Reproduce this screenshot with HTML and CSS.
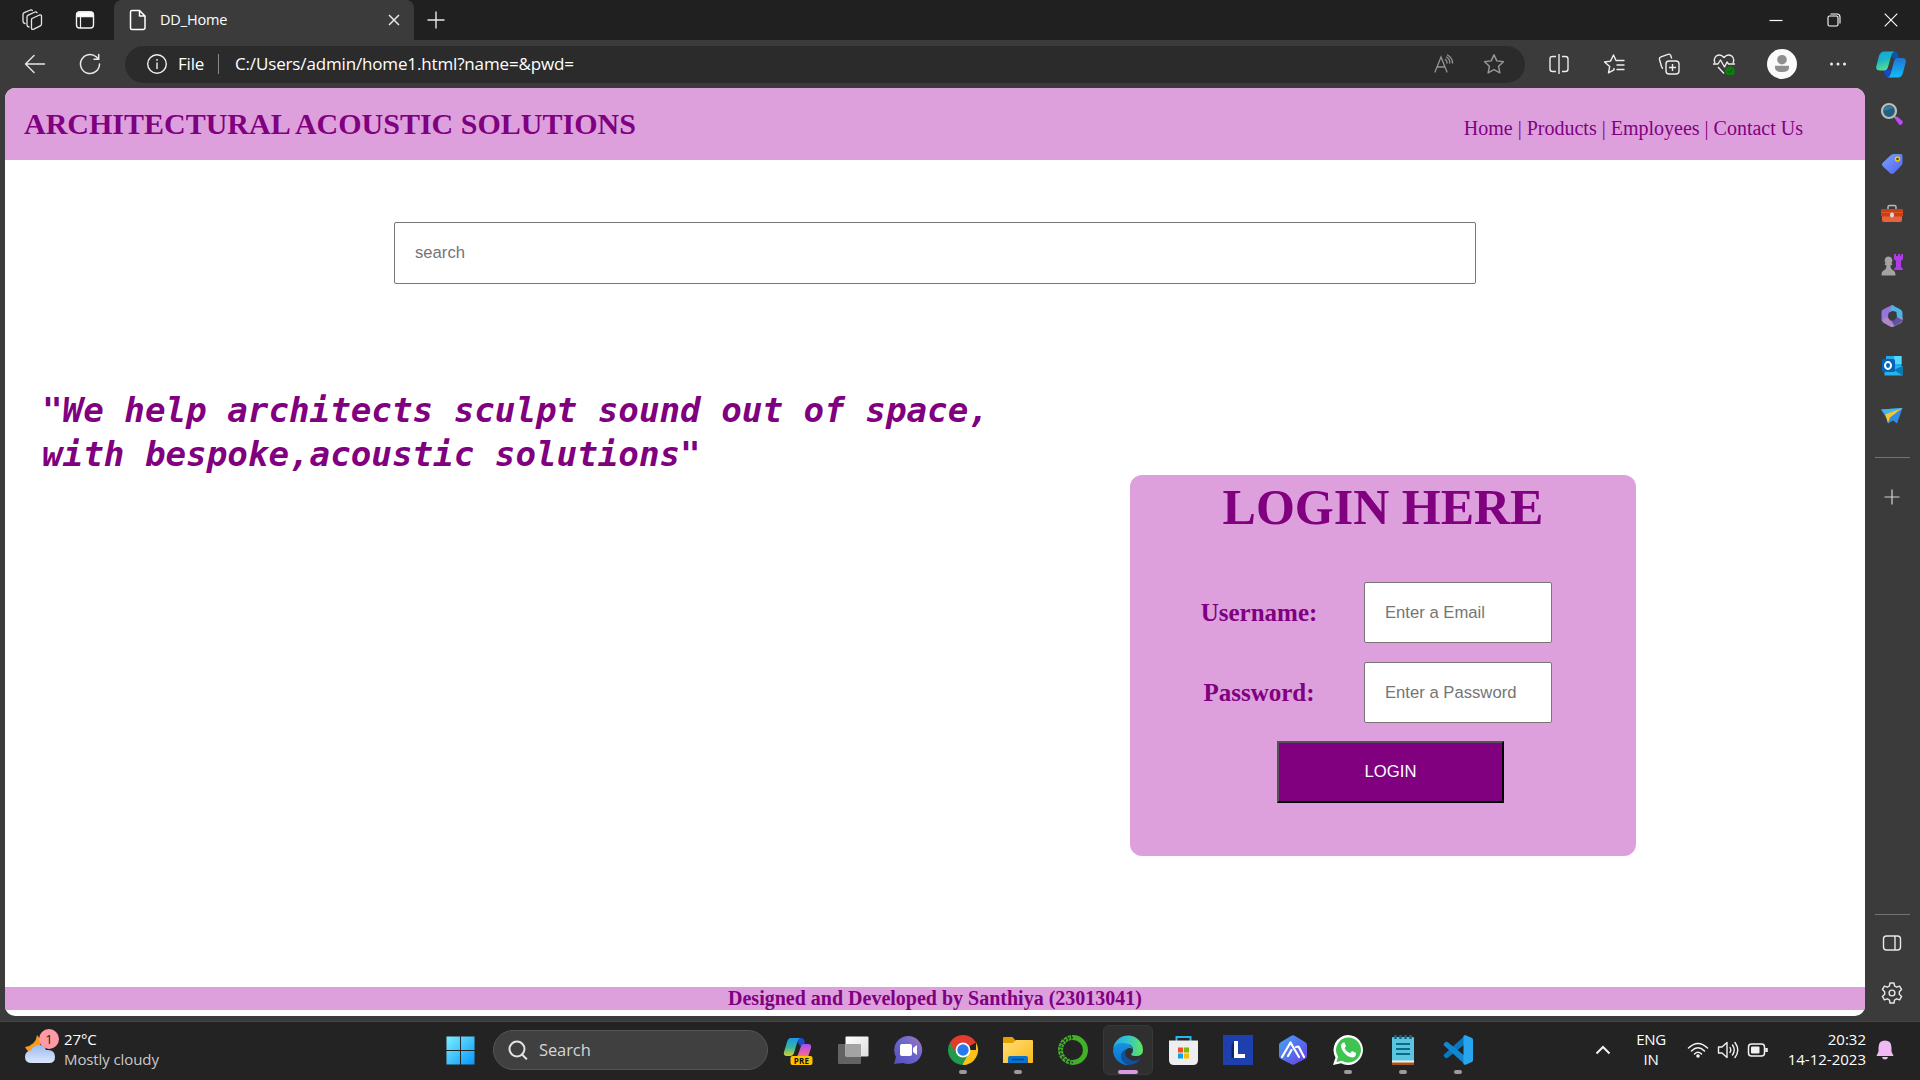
FILE: index.html
```html
<!DOCTYPE html>
<html lang="en">
<head>
<meta charset="utf-8">
<title>DD_Home</title>
<link rel="stylesheet" href="styles.css">
</head>
<body>
<div class="screen">
  <div class="tabbar">
    <svg class="tb-workspaces" width="22" height="22" viewBox="0 0 22 22" fill="none" stroke="#e4e4e4" stroke-width="1.3" stroke-linejoin="round" stroke-linecap="round"><path d="M11 9.500 18.500 6q2-.5 2 1v8q0 1.200-1.200 1.800l-6.500 3.400q-2.300.8-2.300-1.200v-8q0-1 .5-1.500zM8 18Q6 17.500 6 16V8q0-1.200 1.200-1.800L14 3q1.500-.5 2 .8M4 14.500Q2 14 2 12.500V5.500q0-1.200 1.200-1.800L9.500 1q1.300-.3 1.800.5"/></svg>
    <svg class="tb-actions" width="20" height="20" viewBox="0 0 20 20" fill="none" stroke="#f2f2f2" stroke-width="1.400"><rect x="1.500" y="2" width="17" height="16" rx="3"/><path d="M2 4.500Q2 2 5 2h10q3 0 3 2.500V6.500H2z" fill="#fff"/><path d="M5.500 6v12" stroke-width="1.200"/></svg>
    <div class="tab">
      <svg width="18" height="22" viewBox="0 0 18 22" fill="none" stroke="#fff" stroke-width="1.500" stroke-linejoin="round"><path d="M3 1.500h7.500L16 7v11.500q0 2-2 2H3q-1.500 0-1.500-1.500V3Q1.500 1.500 3 1.500zM10.500 1.500V7H16"/></svg>
      <span class="tab-title">DD_Home</span>
      <svg class="tab-close" width="12" height="14" viewBox="0 0 12 14" stroke="#e8e8e8" stroke-width="1.500"><path d="M1 2l10 10M11 2 1 12"/></svg>
    </div>
    <svg class="new-tab" width="18" height="18" viewBox="0 0 18 18" stroke="#e8e8e8" stroke-width="1.400"><path d="M9 .5v17M.5 9h17"/></svg>
    <div class="window-buttons">
      <svg width="14" height="14" viewBox="0 0 14 14" stroke="#fff" stroke-width="1.200"><path d="M.5 7.500h13"/></svg>
      <svg width="14" height="14" viewBox="0 0 14 14" fill="none" stroke="#fff" stroke-width="1.100"><rect x="1" y="3" width="10" height="10" rx="1.500"/><path d="M3.500 1h6.500q3 0 3 3v6.500"/></svg>
      <svg width="14" height="14" viewBox="0 0 14 14" stroke="#fff" stroke-width="1.100"><path d="M.7.700l12.600 12.600M13.300.700.7 13.300"/></svg>
    </div>
  </div>

  <div class="toolbar">
    <svg class="nav-back" width="22" height="20" viewBox="0 0 22 20" fill="none" stroke="#e8e8e8" stroke-width="1.400" stroke-linecap="round" stroke-linejoin="round"><path d="M20.500 10H1.500M10 1.500 1.500 10l8.500 8.500"/></svg>
    <svg class="nav-reload" width="22" height="22" viewBox="0 0 22 22" fill="none" stroke="#e8e8e8" stroke-width="1.500" stroke-linecap="round"><path d="M20.500 11a9.500 9.500 0 1 1-3.300-7.200L19.500 6M19.700 1.500V6.200H15"/></svg>
    <div class="address">
      <svg width="22" height="22" viewBox="0 0 22 22" fill="none" stroke="#f0f0f0" stroke-width="1.400"><circle cx="11" cy="11" r="9.300"/><path d="M11 9.500V16M11 6v1.700"/></svg>
      <span class="scheme">File</span>
      <span class="divider"></span>
      <span class="url">C:/Users/admin/home1.html?name=&amp;pwd=</span>
      <svg class="addr-read" width="22" height="20" viewBox="0 0 22 20" fill="none" stroke="#969696" stroke-width="1.300" stroke-linecap="round"><path d="M2 18 8 3l6 15M4 13h8M12.500 5.500q1.800 1.500 1.500 3.500M13.500 3q3.500 2 3.200 6M14.500 1q5 3 5 8"/></svg>
      <svg class="addr-star" width="22" height="22" viewBox="0 0 24 24" fill="none" stroke="#969696" stroke-width="1.600" stroke-linejoin="round"><path d="M12 2l3.100 6.600 7.200.9-5.300 5 1.400 7.200L12 18.200l-6.400 3.500L7 14.500l-5.300-5 7.200-.9z"/></svg>
    </div>
    <div class="tools">
      <svg width="22" height="22" viewBox="0 0 22 22" fill="none" stroke="#ededed" stroke-width="1.400"><path d="M8 3.500H4.500Q2 3.500 2 6v10Q2 18.500 4.500 18.500H8M14 3.500h3.500Q20 3.500 20 6v10q0 2.500-2.500 2.500H14M11 1v20"/></svg>
      <svg width="22" height="22" viewBox="0 0 22 22" fill="none" stroke="#ededed" stroke-width="1.400" stroke-linejoin="round" stroke-linecap="round"><path d="M11 15.500v1.300l-5.500 3 1.200-6.300L1.500 9l6-.9L10.500 2 13 7.500h8M14 12h7M14 16.500h7"/></svg>
      <svg width="22" height="22" viewBox="0 0 22 22" fill="none" stroke="#ededed" stroke-width="1.400" stroke-linejoin="round"><rect x="8" y="8" width="13" height="13" rx="3"/><path d="M14.500 11v7M11 14.500h7M5 15.500Q4 15 3.500 13.500L1.500 6.500Q1 4.500 3 3.800l7-2.500q2-.6 2.700 1.200l1 3"/></svg>
      <svg width="22" height="22" viewBox="0 0 22 22" fill="none" stroke="#ededed" stroke-width="1.400" stroke-linejoin="round"><path d="M2 10Q0 5.500 3.500 2.800 7.500.5 11 4.500 14.500.5 18.500 2.800 22 5.500 20 10M0 11h5l2.500-4 4 7 2.500-5 1.500 2H22M5 14l6 6.500"/><circle cx="17" cy="18" r="4.800" fill="#107c10" stroke="none"/><path d="M14.800 18l1.600 1.600 3-3.200" stroke="#064d0a" stroke-width="1"/></svg>
      <svg class="avatar" width="30" height="30" viewBox="0 0 30 30"><circle cx="15" cy="15" r="15" fill="#fafafa"/><circle cx="15" cy="10.700" r="4.800" fill="#8f8f8f"/><path d="M8 16.800h14v1.700q0 4.500-7 4.500t-7-4.500z" fill="#8f8f8f"/></svg>
      <svg width="18" height="6" viewBox="0 0 18 6" fill="#ededed"><circle cx="2.500" cy="3" r="1.500"/><circle cx="9" cy="3" r="1.500"/><circle cx="15.500" cy="3" r="1.500"/></svg>
    </div>
    <svg class="copilot" width="30" height="27" viewBox="0 0 30 27"><defs><linearGradient id="cpA" x1="0" y1="0" x2=".3" y2="1"><stop offset="0" stop-color="#1aa0e8"/><stop offset=".5" stop-color="#18b6c4"/><stop offset="1" stop-color="#55dd93"/></linearGradient><linearGradient id="cpB" x1="0" y1="0" x2="0" y2="1"><stop offset="0" stop-color="#2173d8"/><stop offset="1" stop-color="#12bdfa"/></linearGradient></defs><path d="M14 .5h5q2.500 0 3 3l1 4h-6z" fill="#0b57a5"/><path d="M7 19h8l-2 7.500q-3 0-4-3z" fill="#1748ce"/><path d="M8 .5h10q-2 1-3 5l-3 10.500q-1 3.500-4 3.500H4q-5 0-3.500-5L3 5Q4.500.5 8 .500z" fill="url(#cpA)"/><path d="M21 7h5q5 0 3.500 5L27 21.500q-1.200 5-5 5H12q2-1 3-5l3-11q1-3.500 3-3.500z" fill="url(#cpB)"/></svg>
  </div>

  <div class="middle">
    <div class="page">
      <header class="site-header">
        <h1>ARCHITECTURAL ACOUSTIC SOLUTIONS</h1>
        <nav>Home | Products | Employees | Contact Us</nav>
      </header>
      <input class="search" type="text" placeholder="search">
      <p class="quote">"We help architects sculpt sound out of space,<br>with bespoke,acoustic solutions"</p>
      <form class="login">
        <h2>LOGIN HERE</h2>
        <div class="fields">
          <label>Username:</label><input type="text" placeholder="Enter a Email">
          <label>Password:</label><input type="text" placeholder="Enter a Password">
        </div>
        <button type="button">LOGIN</button>
      </form>
      <footer>Designed and Developed by Santhiya (23013041)</footer>
    </div>

    <aside class="sidebar">
      <svg width="24" height="24" viewBox="0 0 24 24"><path d="M14.500 16l2.500-1.500 5.500 4.500q1 1.500-.5 3t-3 .5z" fill="#c04af2"/><path d="M13.500 13.500l2.500 2.500" stroke="#888" stroke-width="2"/><circle cx="9" cy="9" r="7" fill="#235f80" stroke="#bdbdb8" stroke-width="2.200"/><path d="M4 9a5 5 0 0 1 9-3" fill="#347d9f"/></svg>
      <svg width="24" height="24" viewBox="0 0 24 24"><defs><linearGradient id="tag" x1="0" x2="1" y2="1"><stop offset="0" stop-color="#77a5ff"/><stop offset="1" stop-color="#5560ee"/></linearGradient></defs><path d="M14 2h6.500q2 0 2 2v7q0 1.500-1.500 3l-7 7q-2 2-4 0l-7-6.500q-2-2 0-4L11 3q1.500-1 3-1z" fill="url(#tag)"/><circle cx="17.500" cy="7" r="2" fill="#4d3c22" stroke="#f3d000" stroke-width="1.500"/></svg>
      <svg width="24" height="24" viewBox="0 0 24 24"><path d="M8 7V4q0-1.500 1.500-1.500h5Q16 2.500 16 4v3" fill="none" stroke="#b6bbb9" stroke-width="1.500"/><rect x="2" y="11" width="20" height="8" rx="2" fill="#e8633b"/><rect x="1" y="6" width="22" height="7.500" rx="1.200" fill="#c94018"/><path d="M1 9.500h22" stroke="#e25328"/><rect x="10" y="9.500" width="4" height="5" rx="2" fill="#d5d8d8"/></svg>
      <svg width="24" height="24" viewBox="0 0 24 24"><path d="M14 1h2v2h2V1h2v2h1V1h2v5l-2 2v6q2 1 2 3h-9q0-2 2-3V8l-2-2z" fill="#b03be8"/><path d="M8.500 3.500a4 4 0 0 1 3 6.500l1 1.500-2 1q0 4 3 5 2 1 2 5h-14q0-4 2-5 3-1 3-5l-2-1 1-1.500a4 4 0 0 1 3-6.500z" fill="#a3a3a3"/></svg>
      <svg width="24" height="24" viewBox="0 0 24 24"><path d="M12 1 3 5.500Q1.500 6.500 1.500 8v8l7-2.500V9l5-2.500V1.500z" fill="#9278dd"/><path d="M12 1l8.500 4.500Q22.500 6.500 22.500 9v7l-6-3V8L10 6z" fill="#4cb5e8"/><path d="M1.500 16l5-3 6 4 10-4v3q0 2-1.500 3L14 22.500q-2 1-4 0L3 18.500z" fill="#af88ca"/><path d="M16 13l6.500 3-1 2-7 4-3-5z" fill="#5f53a2"/><path d="M10 8h5l2 4-2.500 4.500H10L8 12z" fill="#3b3b3b"/></svg>
      <svg width="24" height="24" viewBox="0 0 24 24"><path d="M6 2h15.500v18H6z" fill="#28a8ea"/><path d="M14 2h7.500v8H14z" fill="#50d9ff"/><path d="M4.500 12l18 0v9.500h-18z" fill="#25b3ed"/><path d="M22.500 12v9.500L14 16z" fill="#0878b8"/><rect x="2" y="5" width="13" height="13" rx="1.500" fill="#0364b8"/><ellipse cx="8" cy="11.500" rx="3" ry="3.400" fill="none" stroke="#fff" stroke-width="2"/></svg>
      <svg width="24" height="24" viewBox="0 0 24 24"><path d="M1 5.500 22.500 4 17 19.500l-4-3-5 3-2-6z" fill="#318ee5"/><path d="M1 5.500 22.500 4 7 12z" fill="#41b4ef"/><path d="M5 10.500 22.500 4 10 13.500l-2 5.500-1.500-5z" fill="#f7c52b"/></svg>
      <span class="rule"></span>
      <svg class="side-plus" width="16" height="16" viewBox="0 0 16 16" stroke="#d4d4d4" stroke-width="1.200"><path d="M8 .5v15M.5 8h15"/></svg>
      <div class="side-bottom">
        <span class="rule"></span>
        <svg width="22" height="22" viewBox="0 0 22 22" fill="none" stroke="#e8e8e8" stroke-width="1.400"><rect x="2.500" y="4" width="17" height="14" rx="3"/><path d="M14 4v14"/></svg>
        <svg width="24" height="24" viewBox="0 0 24 24" fill="none" stroke="#e8e8e8" stroke-width="1.400" stroke-linejoin="round"><circle cx="12" cy="12" r="2.900"/><path d="M10 2h4l.6 3 2 1.200 3-1.100 2 3.500-2.300 2.100v2.600l2.300 2.100-2 3.500-3-1.100-2 1.200-.6 3h-4l-.6-3-2-1.200-3 1.100-2-3.500 2.300-2.100v-2.600L2.400 8.600l2-3.500 3 1.100 2-1.200z"/></svg>
      </div>
    </aside>
  </div>

  <div class="taskbar">
    <div class="weather">
      <div class="weather-icon">
        <svg width="34" height="30" viewBox="0 0 34 30"><defs><linearGradient id="cl" x1="0" y1="0" x2="0" y2="1"><stop offset="0" stop-color="#9bb9ef"/><stop offset="1" stop-color="#dbe8fb"/></linearGradient></defs><path d="M13 0q-1 10-12 12 3 6 9 6 8-2 6-14z" fill="#f59b1e"/><path d="M8 28q-7 0-7-6 0-6 6-6.500Q9 10 15 10q5 0 7 5 9-1 9 7 0 6-6 6z" fill="url(#cl)"/></svg>
        <span class="badge">1</span>
      </div>
      <div class="weather-text"><span class="temp">27°C</span><span class="sky">Mostly cloudy</span></div>
    </div>

    <div class="app start"><svg width="29" height="29" viewBox="0 0 30 30"><defs><linearGradient id="wn" gradientUnits="userSpaceOnUse" x1="0" y1="0" x2="30" y2="30"><stop offset="0" stop-color="#7cf1ff"/><stop offset="1" stop-color="#0594fb"/></linearGradient></defs><path d="M.5.500h14v14H.500zM15.500.500h14v14h-14zM.5 15.500h14v14H.500zM15.500 15.500h14v14h-14z" fill="url(#wn)"/></svg></div>
    <div class="task-search">
      <svg width="20" height="20" viewBox="0 0 20 20" fill="none" stroke="#e3e3e3" stroke-width="2" stroke-linecap="round"><circle cx="9" cy="9" r="7.500"/><path d="M14 14.500l4.300 4.300"/></svg>
      <span>Search</span>
    </div>
    <div class="app">
      <svg width="32" height="32" viewBox="0 0 32 32"><defs><linearGradient id="pA" x1="0" y1="0" x2="0" y2="1"><stop offset="0" stop-color="#1f97ed"/><stop offset=".5" stop-color="#31b6a3"/><stop offset="1" stop-color="#d8cf32"/></linearGradient><linearGradient id="pB" x1="0" y1="0" x2="0" y2="1"><stop offset="0" stop-color="#a64df2"/><stop offset="1" stop-color="#ff6f86"/></linearGradient></defs><path d="M14 4h5q3 0 4 5l-5 3z" fill="#1950c7"/><path d="M9 4h9q-2 1-3 5l-3 10q-1 3-4 3H5q-4 0-3-4L5 8q1-4 4-4z" fill="url(#pA)"/><path d="M21 10h5q4 0 3 4l-3 9H14q2-1 3-5l2-6q.5-2 2-2z" fill="url(#pB)"/><rect x="8.500" y="22" width="22" height="9" rx="2" fill="#ffc400"/><text x="19.500" y="29.500" text-anchor="middle" class="pre">PRE</text></svg>
    </div>
    <div class="app"><svg width="32" height="32" viewBox="0 0 32 32"><defs><linearGradient id="tvw" x2="1" y2="1"><stop offset="0" stop-color="#fff"/><stop offset="1" stop-color="#ddd"/></linearGradient></defs><rect x="1" y="10" width="23" height="20" rx="1" fill="#636363"/><rect x="8.500" y="2.500" width="23" height="20" rx="1" fill="url(#tvw)"/><rect x="8.500" y="10" width="15.500" height="12.500" fill="#a3a3a3"/></svg></div>
    <div class="app"><svg width="32" height="32" viewBox="0 0 32 32"><defs><linearGradient id="ct" x1="1" x2="0" y2="1"><stop offset="0" stop-color="#ad71b8"/><stop offset=".4" stop-color="#6e69cf"/><stop offset="1" stop-color="#5550b8"/></linearGradient></defs><path d="M16 2a14 14 0 1 1-5 27L2 30l2-7A14 14 0 0 1 16 2z" fill="url(#ct)"/><rect x="8" y="10" width="12" height="12" rx="2" fill="#fff"/><path d="M21 14l4-3v10l-4-3z" fill="#fff"/></svg></div>
    <div class="app run"><svg width="32" height="32" viewBox="0 0 32 32"><path d="M16 16 3 8.500A15 15 0 0 1 29 8.500z" fill="#e33b2e"/><path d="M16 16H29l0-7.500A15 15 0 0 1 16 31z" fill="#fbc116"/><path d="M3 8.500 16 16l5 5-5.500 10A15 15 0 0 1 3 8.500z" fill="#229a4c"/><path d="M16 9h13.300v-.5H3L9 19z" fill="#e33b2e"/><path d="M22.500 18 15.500 31l4-.5z" fill="#fbc116"/><circle cx="16" cy="16" r="7.400" fill="#fff"/><circle cx="16" cy="16" r="5.700" fill="#2878ee"/></svg></div>
    <div class="app run"><svg width="32" height="32" viewBox="0 0 32 32"><defs><linearGradient id="fe" x2="1" y2="1"><stop offset="0" stop-color="#ffdf78"/><stop offset="1" stop-color="#fcb817"/></linearGradient></defs><path d="M1 4q0-1 1-1h8.500l3.500 4-3 4H1z" fill="#e5a000"/><path d="M1 9h10l3-3h16q1 0 1 1v21q0 1-1 1H1z" fill="url(#fe)"/><path d="M6 29v-5q0-2 2-2h16q2 0 2 2v5z" fill="#0873cb"/><path d="M10 25.500h12" stroke="#02448c" stroke-width="1.500"/></svg></div>
    <div class="app"><svg width="32" height="32" viewBox="0 0 32 32" fill="none" stroke="#43b02a"><path d="M16 3.500a12.500 12.500 0 0 1 0 25" stroke-width="5"/><path d="M16 28.500a12.500 12.500 0 0 1 0-25" stroke-width="5" stroke-dasharray="3 .8"/><path d="M16 28.500a12.500 12.500 0 0 1 0-25" stroke-width="1.300" stroke="#242424" stroke-dasharray="1.500 2.300"/></svg></div>
    <div class="app run active"><svg width="32" height="32" viewBox="0 0 32 32"><defs><linearGradient id="e1" x2="1"><stop offset="0" stop-color="#23a9e8"/><stop offset=".5" stop-color="#35c5cb"/><stop offset="1" stop-color="#63e45a"/></linearGradient><linearGradient id="e2" y2="1" x2="0"><stop offset="0" stop-color="#1691de"/><stop offset="1" stop-color="#0873d2"/></linearGradient></defs><path d="M1.200 14A15 15 0 0 1 31 16q0 6-7 6-5 0-5-2 2-1 2-4 0-6-7-6-8 0-12.800 4z" fill="url(#e1)"/><path d="M1 16q1-7 10-7 8 0 10 6-6-3-8 3-1 7 4 13A15 15 0 0 1 1 16z" fill="url(#e2)"/><path d="M14 15q-3 8 5 11 5 2 10-2-5 8-14 6.500Q8 27 9 21q1-4 5-6z" fill="#10509f"/></svg></div>
    <div class="app"><svg width="32" height="32" viewBox="0 0 32 32"><path d="M9.500 8V3h14v5" fill="none" stroke="#27b7e9" stroke-width="2"/><path d="M2 6.500h29V26q0 5-5 5H7q-5 0-5-5z" fill="#eeeeef"/><path d="M11 13.500h5v5h-5z" fill="#f25022"/><path d="M17 13.500h5v5h-5z" fill="#7fba00"/><path d="M11 19.500h5v5h-5z" fill="#00a4ef"/><path d="M17 19.500h5v5h-5z" fill="#ffb900"/></svg></div>
    <div class="app"><svg width="32" height="32" viewBox="0 0 32 32"><path d="M1 1h30v30H1z" fill="#1e3fae"/><path d="M12 7 9.500 12v12h2.500z" fill="#10265f"/><path d="M12 7h4v13h7v4H12z" fill="#fff"/></svg></div>
    <div class="app"><svg width="32" height="32" viewBox="0 0 32 32"><defs><linearGradient id="hx" x2="1" y2="1"><stop offset="0" stop-color="#48a4f1"/><stop offset=".5" stop-color="#5372ee"/><stop offset="1" stop-color="#7237dd"/></linearGradient></defs><path d="M14 2q2-1.500 4 0l10 6q2 1 2 3v11q0 2-2 3l-10 5q-2 1.500-4 0L4 25q-2-1-2-3V11q0-2 2-3z" fill="url(#hx)"/><path d="M5 23 13.500 8.500 22 23M11 22l3.500-6M19 13l2.500-.5L27 23" fill="none" stroke="#fff" stroke-width="2.200" stroke-linecap="round" stroke-linejoin="round"/></svg></div>
    <div class="app run"><svg width="32" height="32" viewBox="0 0 32 32"><path d="M16 1a15 15 0 1 1-7 28.300L1 31l2.500-7.500A15 15 0 0 1 16 1z" fill="#fff"/><path d="M16.200 3.500a12.500 12.500 0 1 1-6.200 23.200L4.500 28 6 22.700A12.500 12.500 0 0 1 16.200 3.500z" fill="#3fc351"/><path d="M11 8.500q-3 2-1.500 6 3.500 7.500 10.500 9 4 0 4-4.500l-4-2-2 2.200q-4-1.500-5.500-5l1.500-2-1.500-3.700z" fill="#fff"/></svg></div>
    <div class="app run"><svg width="32" height="32" viewBox="0 0 32 32"><path d="M5 28h22v3H5z" fill="#a6541c"/><path d="M5 26h22v2.500H5z" fill="#f1eee8"/><path d="M5 4q0-1 1-1h20q1 0 1 1v22.500H5z" fill="#5bc5df"/><path d="M9 10h14M9 15h14M9 20h14" stroke="#0b6989" stroke-width="2"/><path d="M8.500 1v4M13.500 1v4M18.500 1v4M23.500 1v4" stroke="#13678b" stroke-width="2.600"/></svg></div>
    <div class="app run"><svg width="32" height="32" viewBox="0 0 32 32"><path d="M23 1.500 2 20.500q-1 1 0 2l1.500 1.500q1 .7 2 0L23 10z" fill="#0877bd"/><path d="M23 30.500 2 11.500q-1-1 0-2L3.500 8q1-.7 2 0L23 22z" fill="#1088d0"/><path d="M23 1l7 3q1 .5 1 2v20q0 1.500-1 2l-7 3-1.500-1V2z" fill="#28a5ef"/></svg></div>

    <div class="tray">
      <div class="tray-chevron"><svg width="16" height="10" viewBox="0 0 16 10" fill="none" stroke="#f2f2f2" stroke-width="2"><path d="M1.500 8.500 8 2l6.500 6.500"/></svg></div>
      <div class="lang"><span>ENG</span><span>IN</span></div>
      <div class="status">
        <svg width="22" height="20" viewBox="0 0 22 20" fill="none" stroke="#f2f2f2" stroke-width="1.500" stroke-linecap="round"><path d="M1.500 8q9.500-9 19 0M4.500 11q6.500-6.500 13 0M7.500 14q3.500-3.500 7 0"/><circle cx="11" cy="16" r="1.800" fill="#f2f2f2" stroke="none"/></svg>
        <svg width="22" height="20" viewBox="0 0 22 20" fill="none" stroke="#f2f2f2" stroke-width="1.400" stroke-linejoin="round" stroke-linecap="round"><path d="M1.500 7H5l5-4.500v15L5 13H1.500zM13 7.500q1.500 2.500 0 5M15.500 5q3.500 5 0 10M18 2.500q5.500 7.500 0 15"/></svg>
        <svg width="22" height="16" viewBox="0 0 22 16" fill="none" stroke="#f2f2f2" stroke-width="1.500"><rect x="1.500" y="2" width="16" height="12" rx="3"/><rect x="4" y="4.500" width="8.500" height="7" rx="1" fill="#f2f2f2" stroke="none"/><path d="M19.500 6v4" stroke-width="2.500"/></svg>
      </div>
      <div class="clock"><span>20:32</span><span>14-12-2023</span></div>
      <svg class="bell" width="18" height="20" viewBox="0 0 18 20" fill="#efb9f3"><path d="M9 .5q6.500 0 6.500 7v4l2 4.500H.500l2-4.500v-4q0-7 6.500-7zM6 17h6q-.5 2.500-3 2.500T6 17z"/></svg>
    </div>
  </div>
</div>
</body>
</html>
```

FILE: styles.css
```css
* { box-sizing: border-box; }
body { margin: 0; background: #3b3b3b; }
svg { display: block; flex: none; }
.screen {
  width: 1920px; height: 1080px; overflow: hidden;
  display: flex; flex-direction: column;
  font-family: "Open Sans", "Noto Sans", sans-serif; color: #fff;
}

/* tab strip */
.tabbar { height: 40px; display: flex; align-items: center; background: #202020; flex: none; }
.tb-workspaces { margin-left: 21px; }
.tb-actions { margin-left: 32px; }
.tab {
  width: 300px; height: 40px; margin-left: 19px; padding: 0 14px 0 15px;
  display: flex; align-items: center; background: #3b3b3b; border-radius: 8px 8px 0 0;
}
.tab-title { margin: 0 0 2px 13px; font-size: 14.500px; letter-spacing: -0.15px; }
.tab-close { margin-left: auto; }
.new-tab { margin-left: 13px; }
.window-buttons { margin-left: auto; margin-right: 22px; display: flex; gap: 43.500px; }

/* toolbar */
.toolbar { height: 48px; display: flex; align-items: center; flex: none; }
.nav-back { margin-left: 24px; }
.nav-reload { margin-left: 33px; }
.address {
  width: 1400px; height: 37px; margin-left: 24px; padding-left: 21px;
  display: flex; align-items: center; background: #2b2b2b; border-radius: 19px;
  font-size: 17px;
}
.scheme { margin: 0 0 2px 10px; width: 40px; letter-spacing: -0.2px; }
.divider { width: 1px; height: 20px; background: #8a8a8a; }
.url { margin: 0 0 2px 16px; letter-spacing: -0.150px; white-space: nowrap; }
.addr-read { margin-left: auto; }
.addr-star { margin: 0 20px 0 28px; }
.tools { display: flex; align-items: center; gap: 33px; margin-left: 23px; }
.tools .avatar { margin: 0 -1px 0 -1px; }
.copilot { margin-left: 29px; }

/* page and sidebar */
.middle { flex: 1; display: flex; min-height: 0; padding: 0 0 5px 5px; }
.page {
  width: 1860px; height: 928px; background: #fff; color: purple; border-radius: 10px;
  overflow: hidden; display: flex; flex-direction: column;
  font-family: "Liberation Serif", "Times New Roman", serif;
}
.site-header {
  height: 72px; padding: 0 62px 0 19px; background: #dda0dd; flex: none;
  display: flex; justify-content: space-between; align-items: center;
}
.site-header h1 { margin: 0; font-size: 30px; line-height: 34px; }
.site-header nav { font-size: 20px; margin-top: 8px; }
input, button { font-family: "Liberation Sans", Arial, sans-serif; font-size: 16.670px; }
input { border: 1px solid #767676; border-radius: 2px; background: #fff; padding: 0 19px 0 20px; }
input::placeholder { color: #757575; opacity: 1; }
.search { width: 1082px; height: 62px; margin: 62px 0 0 389px; flex: none; }
.quote {
  margin: 105px 0 0 37px; white-space: nowrap;
  font: italic bold 34.200px/43.500px "DejaVu Sans Mono", monospace;
}
.login {
  width: 506px; height: 381px; margin: -1px 0 0 1125px; flex: none;
  background: #dda0dd; border-radius: 12px;
  display: flex; flex-direction: column; align-items: center;
}
.login h2 { margin: 3px 0 0; font-size: 50px; line-height: 58px; }
.fields {
  display: grid; grid-template-columns: 164px 188px; grid-auto-rows: 61px;
  row-gap: 19px; margin: 46px 0 0 70px; align-self: flex-start;
}
.fields label { font-size: 25px; font-weight: bold; width: 118px; text-align: center; align-self: center; }
.fields input { width: 188px; height: 61px; }
.login button {
  width: 227px; height: 62px; margin: 18px 0 0 14px; padding: 0 0 0 1px;
  color: #fff; background: purple; border: 2px outset #000;
}
footer {
  height: 23px; margin: auto 0 6px; background: #dda0dd; flex: none;
  text-align: center; font-size: 20px; font-weight: bold; line-height: 22px;
}
.sidebar { width: 54px; display: flex; flex-direction: column; align-items: center; padding-top: 14px; gap: 26.400px; }
.rule { width: 35px; height: 1px; background: #737373; flex: none; }
.sidebar > .rule { margin-top: 2px; }
.side-plus { margin-top: 5px; }
.side-bottom { margin-top: auto; margin-bottom: 11px; display: flex; flex-direction: column; align-items: center; }
.side-bottom svg:nth-child(2) { margin: 17px 0 27px; }

/* taskbar */
.taskbar {
  height: 59px; flex: none; background: #232323; border-top: 1px solid #444;
  display: flex; align-items: center; padding-bottom: 2px;
}
.weather { width: 433px; padding-left: 24px; display: flex; align-items: center; font-size: 15px; line-height: 20px; }
.weather-icon { position: relative; }
.badge {
  position: absolute; left: 15px; top: -6px; width: 20px; height: 20px; border-radius: 50%;
  background: #ff99a4; color: #222; text-align: center; font-size: 13px; line-height: 20px;
}
.weather-text { margin: 0 0 2px 6px; display: flex; flex-direction: column; letter-spacing: -0.1px; }
.sky { color: #c9c9c9; }
.app {
  width: 55px; height: 50px; display: grid; place-items: center; position: relative;
}
.run::after {
  content: ""; position: absolute; left: 24px; bottom: 1px; width: 8px; height: 4px;
  border-radius: 2px; background: #9b9b9b;
}
.active { width: 50px; margin: 0 2px 0 3px; background: #2f2f2f; border: 1px solid #383838; border-radius: 6px; }
.active::after { left: 14px; bottom: 0; width: 20px; background: #d99be0; }
.task-search {
  width: 275px; height: 40px; margin: 0 2px 0 5px; padding: 0 0 1px 14px; border-radius: 20px;
  background: #404040; border: 1px solid #555;
  display: flex; align-items: center; gap: 11px; color: #d5d5d5; font-size: 16.500px;
}
.task-search span { margin-bottom: 1px; letter-spacing: -0.1px; }
.pre { font: bold 8px "Open Sans", sans-serif; fill: #111; letter-spacing: 0.3px; }
.tray { margin-left: auto; display: flex; align-items: center; font-size: 15px; line-height: 20px; }
.tray-chevron { width: 46px; display: grid; place-items: center; }
.lang { width: 50px; margin-bottom: 2px; display: flex; flex-direction: column; align-items: center; letter-spacing: -0.3px; }
.status { display: flex; align-items: center; gap: 8px; margin-left: 11px; }
.clock { width: 97px; margin-bottom: 2px; display: flex; flex-direction: column; align-items: flex-end; letter-spacing: 0; }
.bell { margin: 0 26px 0 10px; }
```
